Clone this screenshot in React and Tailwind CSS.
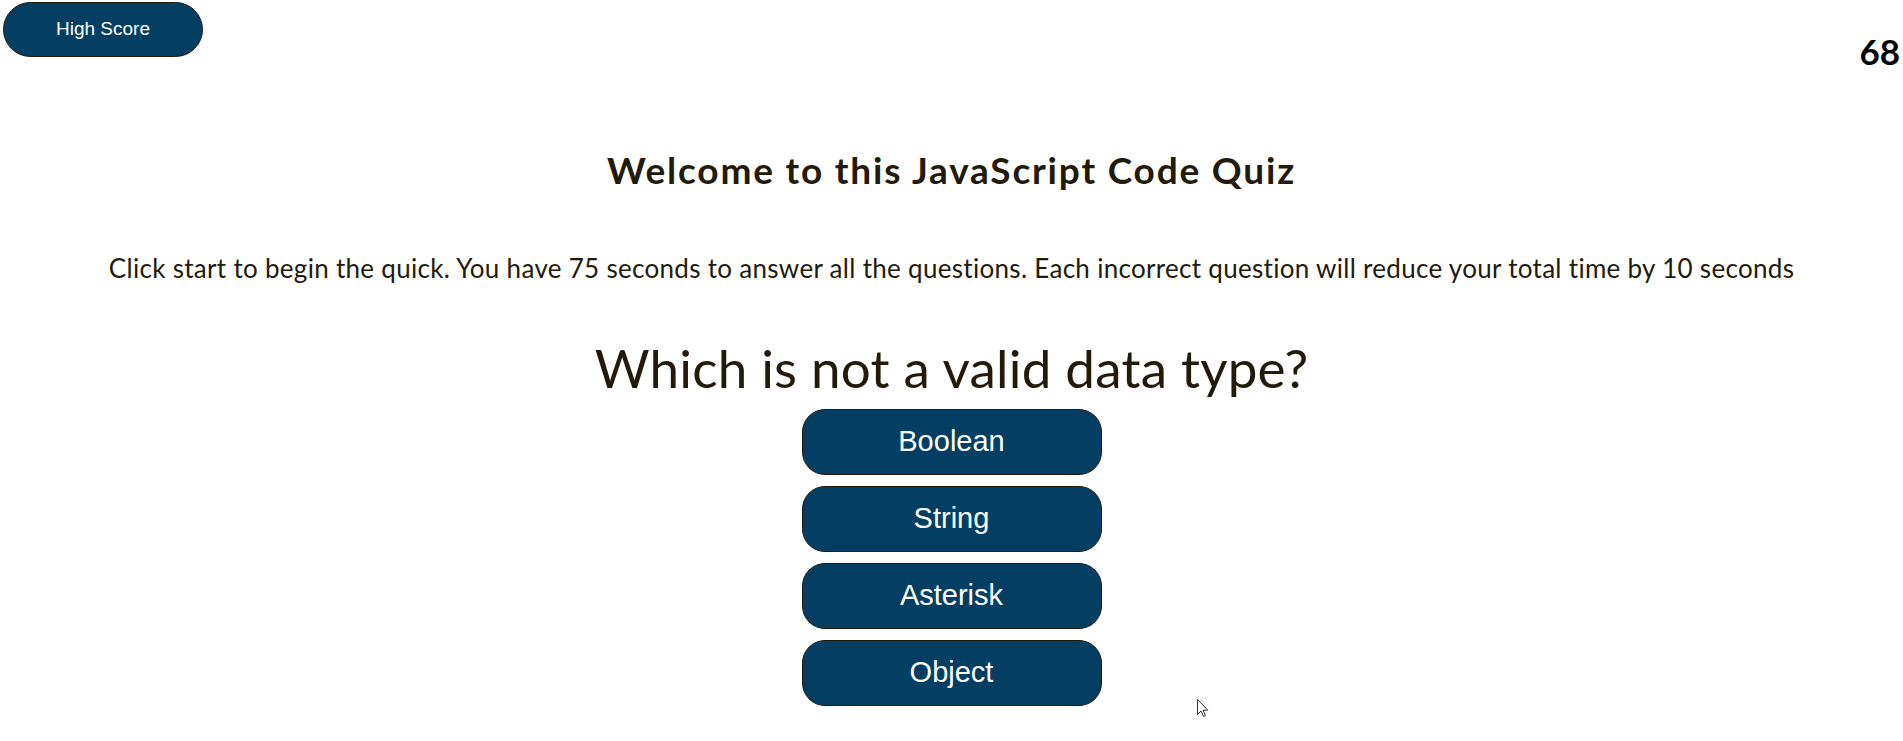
export default function App() {
  const answers = ["Boolean", "String", "Asterisk", "Object"];
  return (
    <div className="relative min-h-[741px] bg-white text-[#221b0c] font-['Lato',sans-serif]">
      <div className="flex items-start justify-between">
        <button className="ml-[3px] mt-[2px] h-[55px] w-[200px] rounded-full border border-[#1d1a0e] bg-[#043f63] text-[19px] text-white font-['Liberation_Sans',Arial,sans-serif]">
          High Score
        </button>
        <div className="mr-[3px] mt-[34px] text-[35px] font-bold leading-none text-black">68</div>
      </div>
      <h1 className="mt-[82px] text-center text-[37px] font-bold leading-none tracking-[1.8px]">
        Welcome to this JavaScript Code Quiz
      </h1>
      <p className="mt-[67px] text-center text-[26px] leading-none tracking-[0.3px]">
        Click start to begin the quick. You have 75 seconds to answer all the questions. Each incorrect question will reduce your total time by 10 seconds
      </p>
      <h2 className="mt-[60px] text-center text-[53px] leading-none tracking-[0.2px]">Which is not a valid data type?</h2>
      <div className="mt-[15px] flex flex-col items-center gap-[11px]">
        {answers.map((a) => (
          <button
            key={a}
            className="h-[66px] w-[300px] rounded-[23px] border border-[#1d1a0e] bg-[#043f63] text-[29px] text-white font-['Liberation_Sans',Arial,sans-serif]"
          >
            {a}
          </button>
        ))}
      </div>
      <svg className="absolute left-[1197px] top-[699px]" width="12" height="19" viewBox="0 0 12 19">
        <path d="M0.5 0.5 L0.5 15.5 L4 12 L6.5 17.5 L8.5 16.6 L6 11.2 L10.8 11.2 Z" fill="white" stroke="#333" strokeWidth="1" />
      </svg>
    </div>
  );
}
